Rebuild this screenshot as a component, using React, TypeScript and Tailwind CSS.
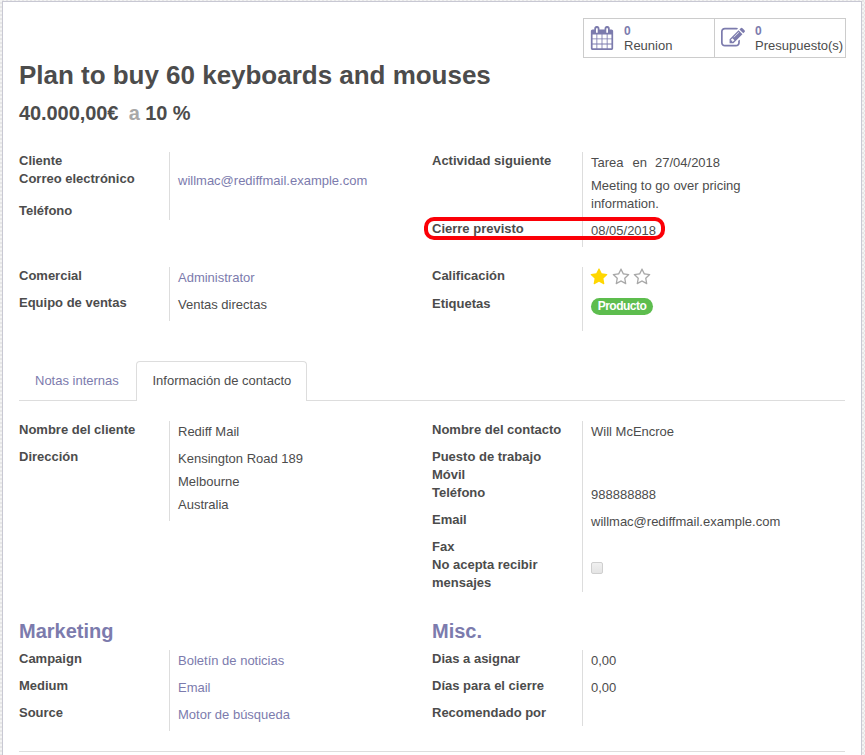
import React from "react";

const PATHS = {
  calendar:
    "M192 1664h288v-288h-288v288zM544 1664h320v-288h-320v288zM192 1312h288v-320h-288v320zM544 1312h320v-320h-320v320zM192 928h288v-288h-288v288zM928 1664h320v-288h-320v288zM544 928h320v-288h-320v288zM1312 1664h288v-288h-288v288zM928 1312h320v-320h-320v320zM576 480v-288q0-13-9.5-22.500t-22.500-9.500h-64q-13 0-22.500 9.500t-9.500 22.500v288q0 13 9.500 22.500t22.500 9.500h64q13 0 22.500-9.500t9.500-22.500zM1312 1312h288v-320h-288v320zM928 928h320v-288h-320v288zM1312 928h288v-288h-288v288zM1344 480v-288q0-13-9.500-22.500t-22.500-9.500h-64q-13 0-22.500 9.500t-9.500 22.500v288q0 13 9.500 22.500t22.500 9.500h64q13 0 22.500-9.500t9.500-22.500zM1728 384v1280q0 52-38 90t-90 38h-1408q-52 0-90-38t-38-90v-1280q0-52 38-90t90-38h128v-96q0-66 47-113t113-47h64q66 0 113 47t47 113v96h384v-96q0-66 47-113t113-47h64q66 0 113 47t47 113v96h128q52 0 90 38t38 90z",
  edit: "M888 1184l116-116-152-152-116 116v56h96v96h56zm440-720q-16-16-33 1l-350 350q-17 17-1 33t33-1l350-350q17-17 1-33zm80 594v190q0 119-84.500 203.500t-203.500 84.500h-832q-119 0-203.500-84.500t-84.500-203.500v-832q0-119 84.500-203.500t203.500-84.500h832q63 0 117 25 15 7 18 23 3 17-9 29l-49 49q-14 14-32 8-23-6-45-6h-832q-66 0-113 47t-47 113v832q0 66 47 113t113 47h832q66 0 113-47t47-113v-126q0-13 9-22l64-64q15-15 35-7t20 29zm-96-738l288 288-672 672h-288v-288zm444 132l-92 92-288-288 92-92q28-28 68-28t68 28l152 152q28 28 28 68t-28 68z",
  star: "M1728 647q0 22-26 48l-363 354 86 500q1 7 1 20 0 21-10.500 35.500t-30.500 14.500q-19 0-40-12l-449-236-449 236q-22 12-40 12-21 0-31.500-14.500t-10.500-35.500q0-6 2-20l86-500-364-354q-25-27-25-48 0-37 56-46l502-73 225-455q19-41 49-41t49 41l225 455 502 73q56 9 56 46z",
  starOutline:
    "M1201 1004l306-297-422-62-189-382-189 382-422 62 306 297-73 421 378-199 377 199zm527-357q0 22-26 48l-363 354 86 500q1 7 1 20 0 50-41 50-19 0-40-12l-449-236-449 236q-22 12-40 12-21 0-31.500-14.500t-10.500-35.500q0-6 2-20l86-500-364-354q-25-27-25-48 0-37 56-46l502-73 225-455q19-41 49-41t49 41l225 455 502 73q56 9 56 46z",
};

function Icon({ name, className }: { name: keyof typeof PATHS; className: string }) {
  return (
    <svg viewBox="0 0 1792 1792" fill="currentColor" className={className} aria-hidden="true">
      <path d={PATHS[name]} />
    </svg>
  );
}

function Field({ label, h, children }: { label: string; h: string; children?: React.ReactNode }) {
  return (
    <div className={`flex ${h}`}>
      <div className="w-[150px] shrink-0 pr-2 font-bold">{label}</div>
      <div className="flex-1 border-l border-[#dddddd] pl-2 pt-[2px]">{children}</div>
    </div>
  );
}

function Group({ className = "", children }: { className?: string; children: React.ReactNode }) {
  return <div className={`w-[413px] shrink-0 ${className}`}>{children}</div>;
}

function Link({ children }: { children: React.ReactNode }) {
  return <a className="text-[#7c7bad]">{children}</a>;
}

function Stat({ icon, label }: { icon: "calendar" | "edit"; label: string }) {
  return (
    <div className="flex w-[131px] border-r border-[#cccccc] pl-[6px]">
      <Icon name={icon} className="mt-[7px] h-6 w-6 shrink-0 text-[#7c7bad]" />
      <div className="ml-[10px] pt-[5px] leading-[15px]">
        <div className="text-xs font-bold leading-[14px] text-[#7c7bad]">0</div>
        <div className="whitespace-nowrap">{label}</div>
      </div>
    </div>
  );
}

export default function App() {
  return (
    <div className="h-[755px] w-[865px] overflow-hidden bg-[#eeeeee] bg-[repeating-conic-gradient(#e6e6e6_0_25%,#f4f4f4_0_50%)] bg-[size:4px_4px] pl-[2px] pt-px font-['Liberation_Sans',Arial,sans-serif] text-[13px] leading-[18px] text-[#4c4c4c]">
      <div className="h-[780px] w-[860px] border border-[#c8c8d3] bg-white pl-4 pr-[15px] pt-4">
        <div className="flex h-10 justify-end">
          <div className="flex border border-r-0 border-[#cccccc]">
            <Stat icon="calendar" label="Reunion" />
            <Stat icon="edit" label="Presupuesto(s)" />
          </div>
        </div>
        <h1 className="h-[42px] whitespace-nowrap text-[26px] font-bold leading-[34px] tracking-[-0.02px]">
          Plan to buy 60 keyboards and mouses
        </h1>
        <h2 className="h-[52px] whitespace-pre text-xl font-bold leading-[26px] tracking-[-0.08px]">
          40.000,00€ <span className="ml-[5px] text-[#a8a8a8]">a</span> 10 %
        </h2>

        <div className="flex h-[115px]">
          <Group>
            <Field label="Cliente" h="h-[18px]" />
            <Field label="Correo electrónico" h="h-8">
              <Link>willmac@rediffmail.example.com</Link>
            </Field>
            <Field label="Teléfono" h="h-[18px]" />
          </Group>
          <Group className="relative">
            <Field label="Actividad siguiente" h="h-[68px]">
              <div className="flex">
                <span>Tarea</span>
                <span className="ml-[9px]">en</span>
                <span className="ml-2">27/04/2018</span>
              </div>
              <div className="mt-[5px] w-[160px]">Meeting to go over pricing information.</div>
            </Field>
            <Field label="Cierre previsto" h="h-[27px]">
              08/05/2018
            </Field>
            <div className="absolute left-[-8px] top-[65px] h-[23px] w-[241px] rounded-[10px] border-4 border-[#fb0007]" />
          </Group>
        </div>

        <div className="flex h-[94px]">
          <Group>
            <Field label="Comercial" h="h-[27px]">
              <Link>Administrator</Link>
            </Field>
            <Field label="Equipo de ventas" h="h-[27px]">
              Ventas directas
            </Field>
          </Group>
          <Group>
            <Field label="Calificación" h="h-7">
              <div className="-ml-px -mt-px flex gap-[3.5px]">
                <Icon name="star" className="h-[18px] w-[18px] text-[#ffd700]" />
                <Icon name="starOutline" className="h-[18px] w-[18px] text-[#a8a8a8]" />
                <Icon name="starOutline" className="h-[18px] w-[18px] text-[#a8a8a8]" />
              </div>
            </Field>
            <Field label="Etiquetas" h="h-9">
              <span className="mt-px block h-[17px] w-[62px] rounded-full bg-[#5dbd4e] text-center text-xs font-bold leading-[16px] tracking-[-0.5px] text-white">
                Producto
              </span>
            </Field>
          </Group>
        </div>

        <div className="mr-px flex h-10 border-b border-[#dddddd]">
          <div className="w-[117px] pl-4 pt-[11px]">
            <Link>Notas internas</Link>
          </div>
          <div className="h-10 w-[171px] rounded-t-[4px] border border-b-0 border-[#dddddd] bg-white pl-[15.5px] pt-[10px]">
            Información de contacto
          </div>
        </div>

        <div className="mt-5 flex h-[196px]">
          <Group>
            <Field label="Nombre del cliente" h="h-[27px]">
              Rediff Mail
            </Field>
            <Field label="Dirección" h="h-[73px]">
              <div>Kensington Road 189</div>
              <div className="mt-[5px]">Melbourne</div>
              <div className="mt-[5px]">Australia</div>
            </Field>
          </Group>
          <Group>
            <Field label="Nombre del contacto" h="h-[27px]">
              Will McEncroe
            </Field>
            <Field label="Puesto de trabajo" h="h-[18px]" />
            <Field label="Móvil" h="h-[18px]" />
            <Field label="Teléfono" h="h-[27px]">
              988888888
            </Field>
            <Field label="Email" h="h-[27px]">
              willmac@rediffmail.example.com
            </Field>
            <Field label="Fax" h="h-[18px]" />
            <Field label="No acepta recibir mensajes" h="h-9">
              <div className="mt-1 h-3 w-3 rounded-[2px] border border-[#cfcfcf] bg-gradient-to-b from-[#f0f0f0] to-[#e4e4e4]" />
            </Field>
          </Group>
        </div>

        <div className="mr-px flex h-[135px] border-b border-[#dddddd]">
          <Group>
            <h3 className="h-[33px] text-xl font-bold leading-[28px] text-[#7c7bad]">Marketing</h3>
            <Field label="Campaign" h="h-[27px]">
              <Link>Boletín de noticias</Link>
            </Field>
            <Field label="Medium" h="h-[27px]">
              <Link>Email</Link>
            </Field>
            <Field label="Source" h="h-[27px]">
              <Link>Motor de búsqueda</Link>
            </Field>
          </Group>
          <Group>
            <h3 className="h-[33px] text-xl font-bold leading-[28px] text-[#7c7bad]">Misc.</h3>
            <Field label="Dias a asignar" h="h-[27px]">
              0,00
            </Field>
            <Field label="Días para el cierre" h="h-[27px]">
              0,00
            </Field>
            <Field label="Recomendado por" h="h-[22px]" />
          </Group>
        </div>
      </div>
    </div>
  );
}
